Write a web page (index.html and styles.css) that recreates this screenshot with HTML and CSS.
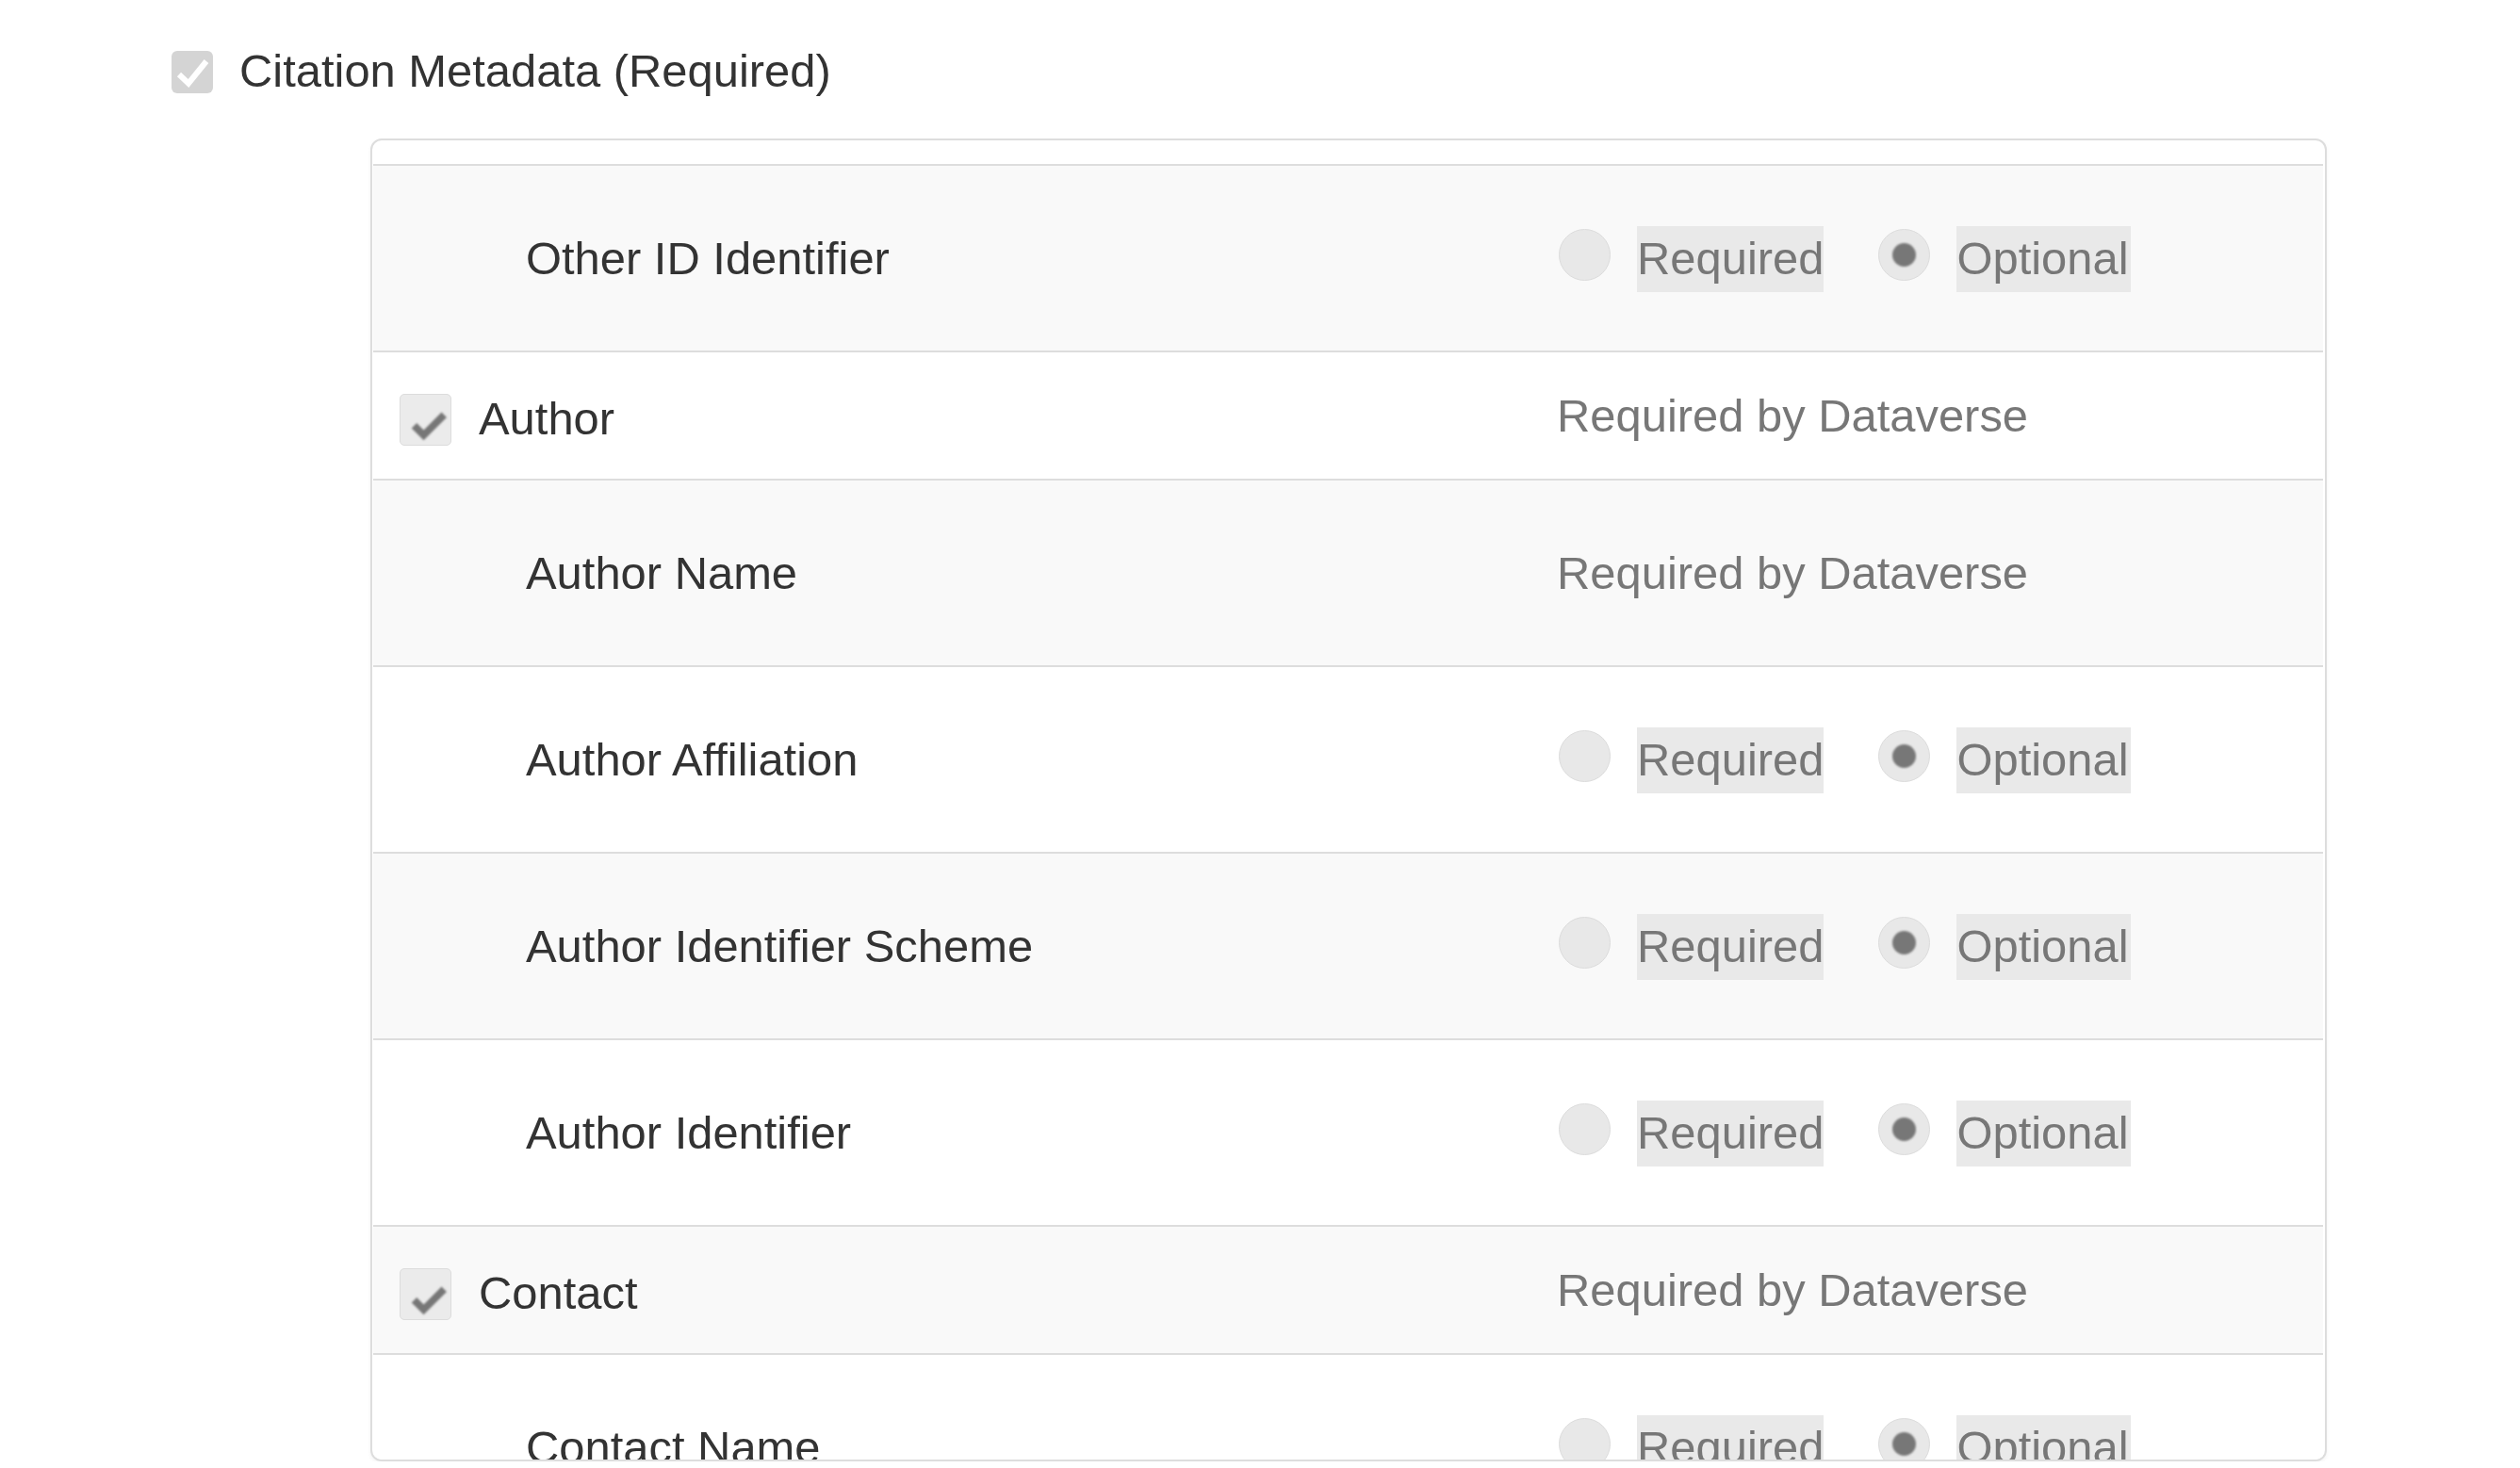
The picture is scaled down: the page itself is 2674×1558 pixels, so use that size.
FILE: index.html
```html
<!DOCTYPE html>
<html lang="en">
<head>
<meta charset="utf-8">
<title>Citation Metadata</title>
<link rel="stylesheet" href="styles.css">
</head>
<body>
<div class="page">
  <div class="block-head">
    <span class="cb cb-top">
      <svg viewBox="0 0 44 44" width="44" height="44"><polyline points="8,25 18,34.5 37,11" fill="none" stroke="#ffffff" stroke-width="6"/></svg>
    </span>
    <span class="block-title">Citation Metadata (Required)</span>
  </div>

  <div class="panel">
    <div class="panel-gap"></div>
    <div class="rows">
      <div class="row child">
        <div class="name">Other ID Identifier</div>
        <div class="opts">
          <span class="radio"></span><span class="opt-label">Required</span>
          <span class="radio on second"></span><span class="opt-label wide">Optional</span>
        </div>
      </div>

      <div class="row parent">
        <div class="name">
          <span class="cb cb-row">
            <svg viewBox="0 0 55 55" width="53" height="53"><polyline points="15,34 25.5,44.5 48,22" fill="none" stroke="#777777" stroke-width="8"/></svg>
          </span>
          <span>Author</span>
        </div>
        <div class="opts"><span class="note">Required by Dataverse</span></div>
      </div>

      <div class="row child">
        <div class="name">Author Name</div>
        <div class="opts"><span class="note">Required by Dataverse</span></div>
      </div>

      <div class="row child">
        <div class="name">Author Affiliation</div>
        <div class="opts">
          <span class="radio"></span><span class="opt-label">Required</span>
          <span class="radio on second"></span><span class="opt-label wide">Optional</span>
        </div>
      </div>

      <div class="row child">
        <div class="name">Author Identifier Scheme</div>
        <div class="opts">
          <span class="radio"></span><span class="opt-label">Required</span>
          <span class="radio on second"></span><span class="opt-label wide">Optional</span>
        </div>
      </div>

      <div class="row child">
        <div class="name">Author Identifier</div>
        <div class="opts">
          <span class="radio"></span><span class="opt-label">Required</span>
          <span class="radio on second"></span><span class="opt-label wide">Optional</span>
        </div>
      </div>

      <div class="row parent">
        <div class="name">
          <span class="cb cb-row">
            <svg viewBox="0 0 55 55" width="53" height="53"><polyline points="15,34 25.5,44.5 48,22" fill="none" stroke="#777777" stroke-width="8"/></svg>
          </span>
          <span>Contact</span>
        </div>
        <div class="opts"><span class="note">Required by Dataverse</span></div>
      </div>

      <div class="row child">
        <div class="name">Contact Name</div>
        <div class="opts">
          <span class="radio"></span><span class="opt-label">Required</span>
          <span class="radio on second"></span><span class="opt-label wide">Optional</span>
        </div>
      </div>
    </div>
  </div>
</div>
</body>
</html>
```
FILE: styles.css
```css
html, body {
  margin: 0;
  padding: 0;
  background: #ffffff;
}

body {
  font-family: "Liberation Sans", Arial, sans-serif;
  font-size: 48.9px;
  line-height: 1.42857;
  color: #333333;
}

.page {
  padding: 42px 0 0 182px;
}

.block-head {
  display: flex;
  align-items: center;
  gap: 28px;
  height: 68.6px;
}

.cb {
  display: inline-flex;
  box-sizing: border-box;
  flex: none;
}

.cb-top {
  width: 44px;
  height: 45px;
  background: #d4d4d4;
  border-radius: 6px;
  align-items: center;
  justify-content: center;
}

.cb-row {
  width: 55px;
  height: 55px;
  background: #ebebeb;
  border: 1.5px solid #dcdcdc;
  border-radius: 5px;
  align-items: center;
  justify-content: center;
}

.cb-row svg {
  filter: blur(1px);
}

.panel {
  margin: 36px 0 0 211px;
  width: 2076px;
  height: 1404px;
  box-sizing: border-box;
  border: 2px solid #dddddd;
  border-radius: 12px;
  overflow: hidden;
  box-shadow: 0 2px 4px rgba(0, 0, 0, 0.05);
  background: #ffffff;
}

.panel-gap {
  height: 25px;
}

.rows {
  margin: 0 2px 0 1px;
}

.row {
  display: grid;
  grid-template-columns: 1256px 1fr;
  align-items: center;
  box-sizing: border-box;
  height: 198px;
  padding-top: 3px;
  border-top: 2px solid #dddddd;
  background: #ffffff;
}

.row.parent {
  height: 136px;
}

.rows > .row:nth-child(odd) {
  background: #f9f9f9;
}

.row.child .name {
  padding-left: 162px;
}

.row.parent .name {
  display: flex;
  align-items: center;
  gap: 29px;
  padding-left: 28px;
  padding-top: 6px;
}

.opts {
  display: flex;
  align-items: center;
}

.note {
  color: #777777;
}

.radio {
  position: relative;
  width: 55px;
  height: 55px;
  box-sizing: border-box;
  border-radius: 50%;
  background: #e8e8e8;
  border: 1.5px solid #dcdcdc;
  margin-left: 2px;
  margin-bottom: 9px;
  flex: none;
}

.radio.second {
  margin-left: 58px;
}

.radio.on::after {
  content: "";
  position: absolute;
  left: 50%;
  top: 50%;
  width: 25px;
  height: 25px;
  margin: -12.5px 0 0 -12.5px;
  border-radius: 50%;
  background: #777777;
  filter: blur(0.8px);
}

.opt-label {
  background: #e9e9e9;
  color: #777777;
  padding: 0;
  margin-left: 28px;
}

.opt-label.wide {
  padding-right: 2px;
}
```
